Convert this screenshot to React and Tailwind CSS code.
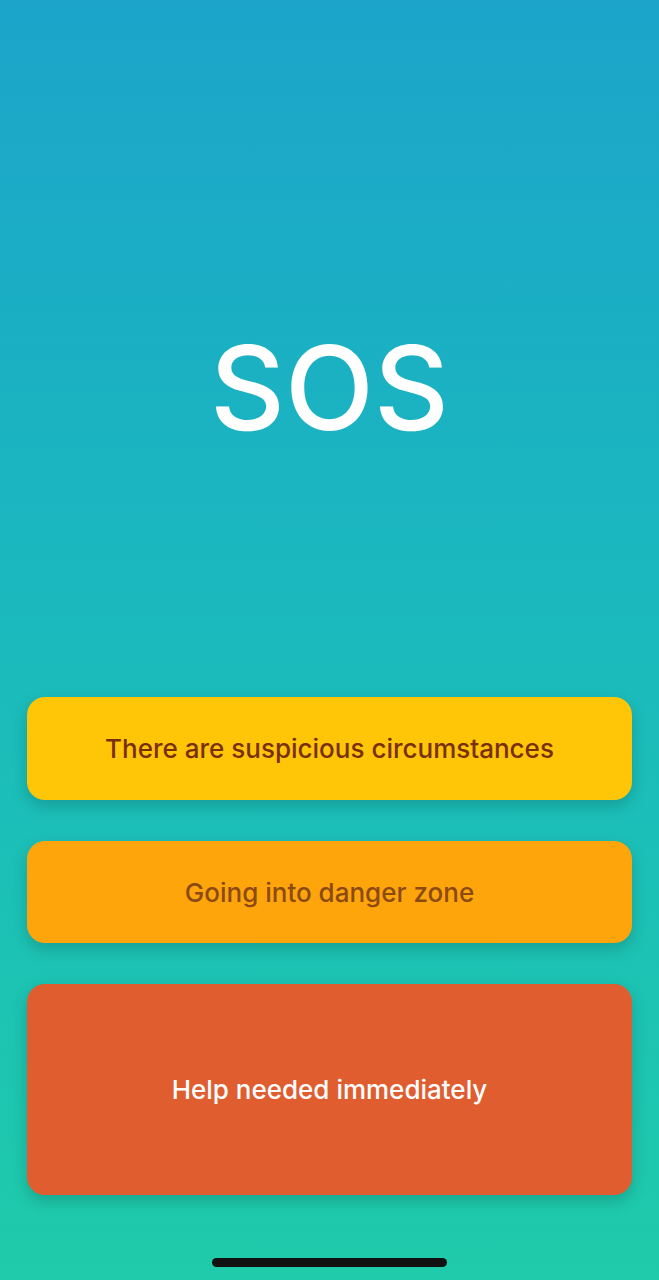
export default function App() {
  const font = { fontFamily: 'Inter, "Noto Sans", sans-serif' };
  return (
    <div
      className="flex h-[1280px] w-full flex-col bg-gradient-to-b from-[#1ca4ca] via-[#1bbabd] to-[#1fcbaa]"
      style={font}
    >
      <div className="flex h-[697px] justify-center pt-[330px]">
        <h1 className="text-[116px] font-medium leading-none text-white">SOS</h1>
      </div>

      <div className="flex flex-col gap-[41px] px-[27px]">
        <button className="flex h-[103px] items-center justify-center rounded-[18px] bg-[#ffc507] text-[26px] font-medium text-[#7a2f0c] shadow-[0_6px_16px_rgba(0,0,0,0.18)]">
          There are suspicious circumstances
        </button>
        <button className="flex h-[102px] items-center justify-center rounded-[18px] bg-[#ffa50c] text-[26px] font-medium text-[#8b4a14] shadow-[0_6px_16px_rgba(0,0,0,0.18)]">
          Going into danger zone
        </button>
        <button className="flex h-[211px] items-center justify-center rounded-[18px] bg-[#e05d30] text-[26px] font-medium text-white shadow-[0_6px_16px_rgba(0,0,0,0.18)]">
          Help needed immediately
        </button>
      </div>

      <div className="flex justify-center pt-[63px]">
        <div className="h-[9px] w-[235px] rounded-full bg-[#111]" />
      </div>
    </div>
  );
}
